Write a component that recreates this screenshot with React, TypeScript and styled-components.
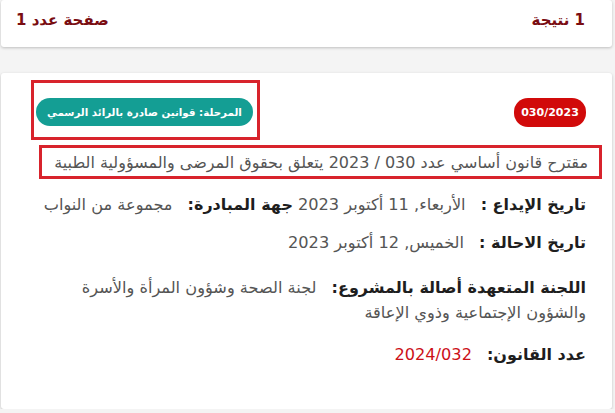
import React from "react";
import styled, { createGlobalStyle } from "styled-components";

const Global = createGlobalStyle`
  html, body { margin: 0; padding: 0; background: #f4f4f4; }
  body { font-family: "DejaVu Sans", "Noto Sans", sans-serif; }
`;

const Page = styled.div`
  direction: rtl;
  width: 611px;
  margin-left: 1px;
  display: flex;
  flex-direction: column;
  gap: 26px;
`;

const Card = styled.div`
  background: #fff;
  border-radius: 3px;
  box-shadow: 0 1px 3px rgba(0, 0, 0, 0.22);
`;

const TopBar = styled(Card)`
  height: 47px;
  box-sizing: border-box;
  padding: 8px 27px 0 15px;
  display: flex;
  justify-content: space-between;
  align-items: flex-start;
`;

const TopText = styled.span`
  font-size: 15px;
  font-weight: 700;
  color: #7a0d12;
  line-height: 24px;
`;

const ResultCard = styled(Card)`
  height: 336px;
  box-sizing: border-box;
  padding: 7px 26px 0 30px;
`;

const Header = styled.div`
  display: flex;
  justify-content: space-between;
  align-items: flex-start;
`;

const Pill = styled.span<{ $bg: string }>`
  display: inline-flex;
  align-items: center;
  justify-content: center;
  height: 28px;
  padding: 0 11px;
  border-radius: 14px;
  background: ${(p) => p.$bg};
  color: #fff;
  font-size: 10.3px;
  font-weight: 700;
  white-space: nowrap;
`;

const NumberPill = styled(Pill)`
  margin-top: 18px;
  width: 72px;
  height: 29px;
  padding: 0;
  font-size: 11px;
  box-sizing: border-box;
`;

const Highlight = styled.div`
  border: 3px solid #d8232c;
  padding: 15px 4px 11px 2px;
`;

const Title = styled.div`
  display: inline-block;
  margin-top: 5px;
  margin-right: -16px;
  border: 3px solid #d8232c;
  padding: 4px 11px 3px 12px;
  font-size: 16px;
  color: #555;
  line-height: 21px;
  white-space: nowrap;
`;

const Fields = styled.div`
  margin-top: 13px;
  display: flex;
  flex-direction: column;
  gap: 13px;
`;

const Row = styled.p<{ $extra?: number }>`
  margin: ${(p) => p.$extra ?? 0}px 0 0;
  font-size: 16.2px;
  line-height: 25px;
  color: #555;
`;

const Label = styled.b`
  font-size: 16px;
  font-weight: 700;
  color: #1e1e1e;
  margin-left: 15px;
`;

const Inline = styled.b`
  font-size: 16px;
  font-weight: 700;
  color: #1e1e1e;
  margin: 0 5px 0 15px;
`;

const LawNumber = styled.span`
  color: #cc1018;
`;

export default function App() {
  return (
    <>
      <Global />
      <Page>
        <TopBar>
          <TopText>1 نتيجة</TopText>
          <TopText>صفحة عدد 1</TopText>
        </TopBar>
        <ResultCard>
          <Header>
            <NumberPill $bg="#d10a0a">030/2023</NumberPill>
            <Highlight>
              <Pill $bg="#149e94">المرحلة: قوانين صادرة بالرائد الرسمي</Pill>
            </Highlight>
          </Header>
          <Title>مقترح قانون أساسي عدد 030 / 2023 يتعلق بحقوق المرضى والمسؤولية الطبية</Title>
          <Fields>
            <Row>
              <Label>تاريخ الإيداع :</Label>
              الأربعاء, 11 أكتوبر 2023
              <Inline>جهة المبادرة:</Inline>
              مجموعة من النواب
            </Row>
            <Row>
              <Label>تاريخ الاحالة :</Label>
              الخميس, 12 أكتوبر 2023
            </Row>
            <Row $extra={7}>
              <Label>اللجنة المتعهدة أصالة بالمشروع:</Label>
              لجنة الصحة وشؤون المرأة والأسرة والشؤون الإجتماعية وذوي الإعاقة
            </Row>
            <Row $extra={4}>
              <Label>عدد القانون:</Label>
              <LawNumber>2024/032</LawNumber>
            </Row>
          </Fields>
        </ResultCard>
      </Page>
    </>
  );
}
